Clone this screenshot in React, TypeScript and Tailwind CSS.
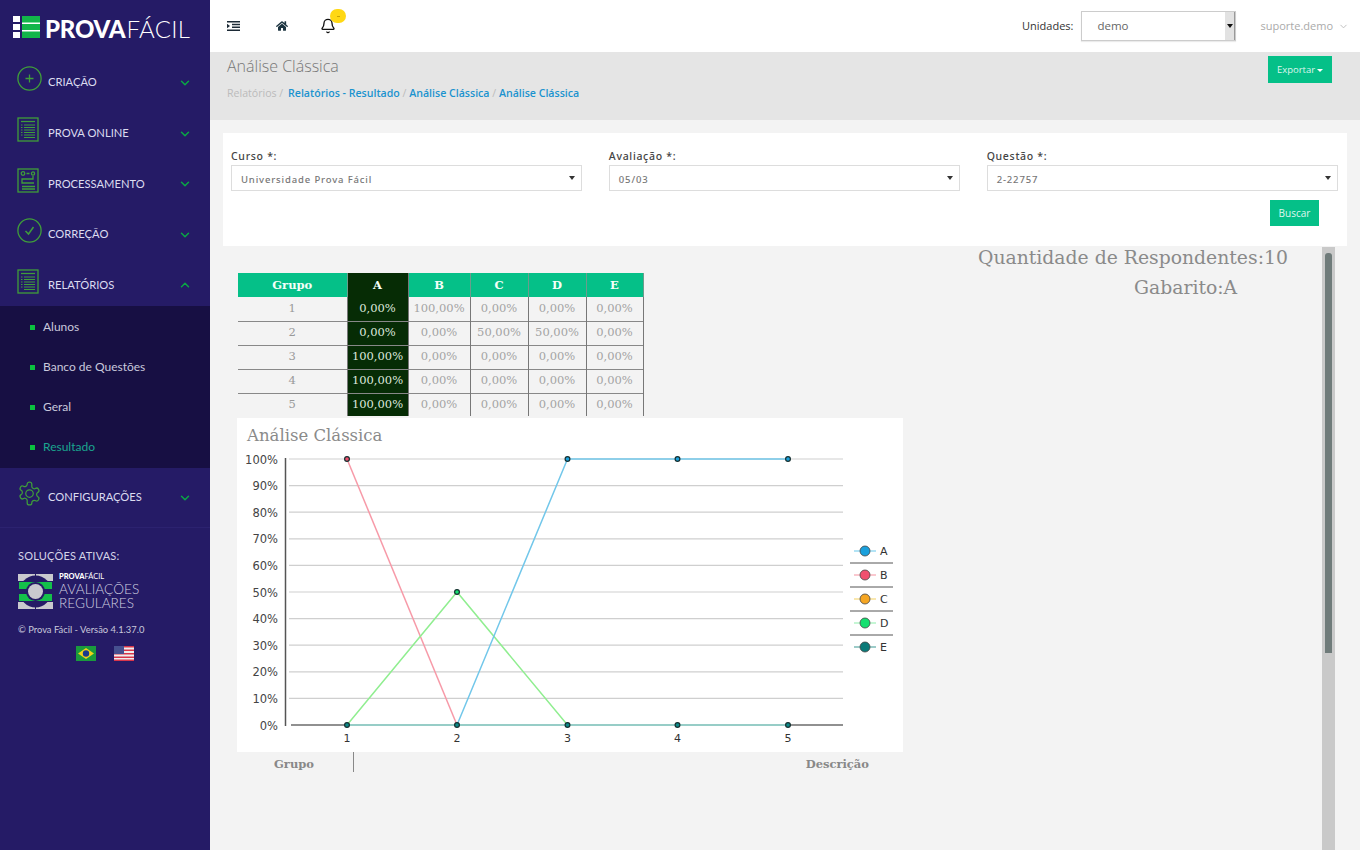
import React from "react";
import { FaHome } from "react-icons/fa";
import { ChevronDown, ChevronUp, Bell } from "lucide-react";

const G = "#3f9d3a";

function Plus() {
  return (
    <svg width="25" height="25" viewBox="0 0 25 25" fill="none" stroke={G} strokeWidth="1.3">
      <circle cx="12.5" cy="12.5" r="11.6" />
      <path d="M12.5 8.5v8M8.5 12.5h8" />
    </svg>
  );
}
function Doc() {
  return (
    <svg width="22" height="25" viewBox="0 0 22 25" fill="none" stroke={G} strokeWidth="1.3">
      <rect x="1" y="1" width="20" height="23" />
      <path d="M4 4.5h14" />
      <path d="M7 8h11M7 10.5h11M7 13h11M7 15.5h11M7 18h11M7 20.5h11" strokeWidth="1" />
      <path d="M4 8h1.5M4 10.5h1.5M4 13h1.5M4 15.5h1.5M4 18h1.5" strokeWidth="1" />
    </svg>
  );
}
function Proc() {
  return (
    <svg width="22" height="25" viewBox="0 0 22 25" fill="none" stroke={G} strokeWidth="1.3">
      <rect x="1" y="1" width="20" height="23" />
      <circle cx="6" cy="5.5" r="1.8" />
      <circle cx="16" cy="5.5" r="1.6" />
      <path d="M9.5 5.5h3M16 8v3H5v4h12M5 18.5h13M5 21h13" />
    </svg>
  );
}
function Check() {
  return (
    <svg width="25" height="25" viewBox="0 0 25 25" fill="none" stroke={G} strokeWidth="1.3">
      <circle cx="12.5" cy="12.5" r="11.6" />
      <path d="M8.5 13l3 3 5-7" strokeWidth="1.5" />
    </svg>
  );
}
function Gear() {
  return (
    <svg width="25" height="25" viewBox="0 0 24 24" fill="none" stroke={G} strokeWidth="1.2" strokeLinecap="round" strokeLinejoin="round">
      <path d="M12.22 1h-.44a2 2 0 0 0-2 2v.18a2 2 0 0 1-1 1.73l-.43.25a2 2 0 0 1-2 0l-.15-.08a2 2 0 0 0-2.73.73l-.22.38a2 2 0 0 0 .73 2.73l.15.1a2 2 0 0 1 1 1.72v.51a2 2 0 0 1-1 1.74l-.15.09a2 2 0 0 0-.73 2.73l.22.38a2 2 0 0 0 2.73.73l.15-.08a2 2 0 0 1 2 0l.43.25a2 2 0 0 1 1 1.73V21a2 2 0 0 0 2 2h.44a2 2 0 0 0 2-2v-.18a2 2 0 0 1 1-1.73l.43-.25a2 2 0 0 1 2 0l.15.08a2 2 0 0 0 2.73-.73l.22-.39a2 2 0 0 0-.73-2.73l-.15-.08a2 2 0 0 1-1-1.74v-.5a2 2 0 0 1 1-1.74l.15-.09a2 2 0 0 0 .73-2.73l-.22-.38a2 2 0 0 0-2.73-.73l-.15.08a2 2 0 0 1-2 0l-.43-.25a2 2 0 0 1-1-1.73V3a2 2 0 0 0-2-2z" />
      <circle cx="12" cy="12" r="3.6" />
    </svg>
  );
}

function NavItem({ icon, label, open, className }: { icon: React.ReactNode; label: string; open?: boolean; className: string }) {
  return (
    <div className={`flex items-center pr-[18px] ${className}`}>
      <div className="w-[48px] pl-[17px] shrink-0 -translate-y-1 flex">{icon}</div>
      <span className="flex-1 text-[11.2px] text-[#dcdcf0] font-['Lato',sans-serif]">{label}</span>
      {open ? <ChevronUp size={14} strokeWidth={2.5} color="#0aa845" /> : <ChevronDown size={14} strokeWidth={2.5} color="#0aa845" />}
    </div>
  );
}

function SubItem({ label, active }: { label: string; active?: boolean }) {
  return (
    <div className="h-[40px] flex items-center pl-[30px]">
      <span className="w-[5px] h-[5px] bg-[#0bc13f] mr-[8px]" />
      <span className={`text-[12px] font-['Lato',sans-serif] ${active ? "text-[#1aa58f]" : "text-[#c9c9dc]"}`}>{label}</span>
    </div>
  );
}

function Sidebar() {
  return (
    <aside className="w-[210px] shrink-0 bg-[#251b66] flex flex-col font-['Lato',sans-serif]">
      <div className="h-[57px] pl-[13px] pt-[16px] flex items-start">
        <svg width="27" height="22" viewBox="0 0 27 22" className="shrink-0">
          <path fill="#fff" d="M0 0h7v6H0zM0 8h7v6H0zM0 16h7v6H0z" />
          <path fill="#fff" d="M9 0h18v22H9z" />
          <path fill="#12b64a" d="M9 0h18v6.5H9zM9 8h18v6H9zM9 15.5h18V22H9z" />
        </svg>
        <span className="ml-[5px] mt-[1px] leading-[24px] text-white font-['Lato',sans-serif] whitespace-nowrap">
          <span className="font-black text-[24px] tracking-[-0.2px]">PROVA</span>
          <span className="font-light text-[24px] tracking-[0.3px] ml-[1px]">FÁCIL</span>
        </span>
      </div>
      <NavItem className="h-[51px]" icon={<Plus />} label="CRIAÇÃO" />
      <NavItem className="h-[51px]" icon={<Doc />} label="PROVA ONLINE" />
      <NavItem className="h-[50px]" icon={<Proc />} label="PROCESSAMENTO" />
      <NavItem className="h-[51px]" icon={<Check />} label="CORREÇÃO" />
      <NavItem className="h-[46px] pt-[4px]" icon={<Doc />} label="RELATÓRIOS" open />
      <div className="h-[162px] bg-[#170f43] pt-px">
        <SubItem label="Alunos" />
        <SubItem label="Banco de Questões" />
        <SubItem label="Geral" />
        <SubItem label="Resultado" active />
      </div>
      <NavItem className="h-[60px] border-b border-[#2c2270]" icon={<Gear />} label="CONFIGURAÇÕES" />
      <div className="pl-[18px] pt-[20px]">
        <div className="text-[11px] leading-[16px] text-[#d5d5e8] tracking-[0.2px]">SOLUÇÕES ATIVAS:</div>
        <div className="flex mt-[9px] items-center">
          <svg width="35" height="35" viewBox="0 0 35 35" className="shrink-0">
            <path fill="#c9c9ce" d="M0 0h17v7H0zM18 0h17v7H18zM0 28h17v7H0zM18 28h17v7H18z" />
            <circle cx="17.5" cy="17.5" r="16" fill="#251b66" />
            <rect x="1" y="8" width="33" height="7" fill="#14c04a" />
            <rect x="1" y="20" width="33" height="7" fill="#14c04a" />
            <circle cx="17.5" cy="17.5" r="9.5" fill="#251b66" />
            <circle cx="17.5" cy="17.5" r="7.5" fill="#c9c9cf" />
          </svg>
          <div className="ml-[6px] text-[#d0d0e0] font-['Lato',sans-serif]">
            <div className="text-[7.5px] leading-[8px] text-white"><b className="font-black">PROVA</b>FÁCIL</div>
            <div className="text-[13.6px] leading-[14px] font-light tracking-[0.1px] mt-[1px]">AVALIAÇÕES</div>
            <div className="text-[13.6px] leading-[14px] font-light">REGULARES</div>
          </div>
        </div>
        <div className="text-[9.4px] leading-[14px] text-[#c9c9dc] mt-[13px]">© Prova Fácil - Versão 4.1.37.0</div>
        <div className="flex mt-[9px] ml-[58px] gap-[18px]">
          <svg width="20" height="15" viewBox="0 0 20 15">
            <rect width="20" height="15" fill="#1a9a3d" />
            <path d="M10 2l8 5.5-8 5.5-8-5.5z" fill="#f2d21a" />
            <circle cx="10" cy="7.5" r="3.2" fill="#1c3a8c" />
          </svg>
          <svg width="20" height="15" viewBox="0 0 20 15">
            <rect width="20" height="15" fill="#eee" />
            <path d="M0 0h20v1.5H0zM0 3.5h20V5H0zM0 7h20v1.5H0zM0 10.5h20V12H0zM0 13.5h20V15H0z" fill="#d8354a" />
            <rect width="10" height="8" fill="#46508f" />
          </svg>
        </div>
      </div>
    </aside>
  );
}

function Topbar() {
  return (
    <header className="h-[52px] shrink-0 bg-white flex items-center font-['Open_Sans',sans-serif]">
      <svg width="13" height="10" viewBox="0 0 13 10" className="ml-[17px] fill-[#1c2a36]">
        <path d="M0 0h13v1.6H0zM5 2.8h8v1.4H5zM5 5.6h8V7H5zM0 8.4h13V10H0zM0 2.8l3 2.2-3 2.2z" />
      </svg>
      <FaHome size={12} color="#1c3440" className="ml-[36px]" />
      <div className="relative ml-[32px] flex">
        <Bell size={16} strokeWidth={2} color="#111" />
        <span className="absolute left-[10px] -top-[9px] w-[16px] h-[14px] rounded-full bg-[#ffd814] flex items-center justify-center">
          <span className="w-[3px] h-px bg-[#c9a400]" />
        </span>
      </div>
      <div className="ml-auto flex items-center">
        <span className="text-[11px] text-[#333]">Unidades:</span>
        <div className="ml-[8px] w-[155px] h-[30px] border border-[#ccc] flex items-center justify-between shadow-[0_1px_1px_rgba(0,0,0,0.08)]">
          <span className="pl-[15px] text-[11.5px] text-[#666]">demo</span>
          <span className="w-[10px] h-full bg-[#e2e2e2] border-r border-[#999] flex items-center justify-center">
            <span className="border-x-[3px] border-x-transparent border-t-[4px] border-t-[#111]" />
          </span>
        </div>
        <span className="ml-[24px] text-[11px] text-[#aaa]">suporte.demo</span>
        <ChevronDown size={11} color="#bbb" className="ml-[5px] mr-[11px]" />
      </div>
    </header>
  );
}

function Field({ label, value, className }: { label: string; value: string; className?: string }) {
  return (
    <div className={className}>
      <div className="text-[10.5px] leading-[14px] text-[#444] tracking-[0.7px] font-medium font-['Noto_Sans',sans-serif]">{label}</div>
      <div className="mt-[2px] h-[26px] border border-[#ddd] bg-white flex items-center justify-between pl-[9px] pr-[6px] font-['Noto_Sans',sans-serif]">
        <span className="text-[9.5px] text-[#777] tracking-[0.85px] font-medium pt-[5px]">{value}</span>
        <span className="border-x-[3px] border-x-transparent border-t-[4px] border-t-[#333]" />
      </div>
    </div>
  );
}

const ROWS = [
  ["1", "0,00%", "100,00%", "0,00%", "0,00%", "0,00%"],
  ["2", "0,00%", "0,00%", "50,00%", "50,00%", "0,00%"],
  ["3", "100,00%", "0,00%", "0,00%", "0,00%", "0,00%"],
  ["4", "100,00%", "0,00%", "0,00%", "0,00%", "0,00%"],
  ["5", "100,00%", "0,00%", "0,00%", "0,00%", "0,00%"],
];

function DataTable() {
  return (
    <table className="w-[405px] ml-px table-fixed border-collapse font-['DejaVu_Serif',serif] text-[11.5px]">
      <colgroup>
        <col className="w-[109px]" />
        <col className="w-[61px]" />
        <col className="w-[62px]" />
        <col className="w-[58px]" />
        <col className="w-[58px]" />
        <col className="w-[57px]" />
      </colgroup>
      <thead>
        <tr className="h-[24px]">
          {["Grupo", "A", "B", "C", "D", "E"].map((h, i) => (
            <th key={h} className={`font-bold text-[11.5px] text-[#f4fff8] p-0 pt-px ${i === 1 ? "bg-[#062c05] border-x border-[#777]" : "bg-[#05c088] border-r border-[#6c9c8c]"}`}>{h}</th>
          ))}
        </tr>
      </thead>
      <tbody>
        {ROWS.map((r, ri) => (
          <tr key={r[0]} className={ri === 4 ? "h-[23px]" : "h-[24px] border-b border-[#888]"}>
            {r.map((c, i) => (
              <td key={i} className={`p-0 text-center whitespace-nowrap ${i === 1 ? "bg-[#062c05] text-[#dfe8df] border-x border-[#777]" : i === 0 ? "text-[#999]" : "text-[#a3a3a3] border-r border-[#777]"}`}>{c}</td>
            ))}
          </tr>
        ))}
      </tbody>
    </table>
  );
}

function Chart() {
  const xs = [347, 457, 567.5, 677.5, 788];
  const y = (v: number) => 459 - 418 + ((100 - v) / 100) * 266;
  const line = (vals: number[]) => vals.map((v, i) => `${xs[i] - 237},${y(v)}`).join(" ");
  const pct = [100, 90, 80, 70, 60, 50, 40, 30, 20, 10, 0];
  const legend = [
    { n: "A", c: "#1aa0dc", l: "#7fd0ee" },
    { n: "B", c: "#f0506e", l: "#f7a3b0" },
    { n: "C", c: "#f5a623", l: "#f5d77a" },
    { n: "D", c: "#15e070", l: "#9ff0b8" },
    { n: "E", c: "#0b7a78", l: "#5aa8a4" },
  ];
  const Dot = ({ cx, cy, c }: { cx: number; cy: number; c: string }) => (
    <circle cx={cx - 237} cy={cy} r="2.4" fill={c} stroke="#163030" strokeWidth="1.2" />
  );
  return (
    <svg width="666" height="334" viewBox="0 0 666 334" className="bg-white block">
      <text x="10" y="23" fontFamily="'DejaVu Serif',serif" fontSize="16.5" fill="#8a8a8a">Análise Clássica</text>
      {pct.map((p) => (
        <g key={p}>
          {p > 0 && <line x1="52" x2="606" y1={y(p)} y2={y(p)} stroke="#cfcfcf" strokeWidth="1.2" />}
          <text x="41" y={y(p) + 4.5} textAnchor="end" fontFamily="'DejaVu Sans',sans-serif" fontSize="11.5" fill="#444">{p}%</text>
        </g>
      ))}
      <line x1="48.5" x2="48.5" y1={y(100) - 1} y2={y(0) + 1} stroke="#555" strokeWidth="1.5" />
      <line x1="54" x2="110" y1={y(0)} y2={y(0)} stroke="#6b6b6b" strokeWidth="1.6" />
      <line x1="110" x2="551" y1={y(0)} y2={y(0)} stroke="#74bdb5" strokeWidth="1.6" />
      <line x1="551" x2="606" y1={y(0)} y2={y(0)} stroke="#6b6b6b" strokeWidth="1.6" />
      <polyline points={line([100, 0, 0, 0, 0]).split(" ").slice(0, 2).join(" ")} fill="none" stroke="#f79aa8" strokeWidth="1.5" />
      <polyline points={line([0, 50, 0, 0, 0]).split(" ").slice(0, 3).join(" ")} fill="none" stroke="#90ee90" strokeWidth="1.5" />
      <polyline points={line([0, 0, 100, 100, 100]).split(" ").slice(1).join(" ")} fill="none" stroke="#72c7ea" strokeWidth="1.5" />
      {xs.map((x, i) => (
        <g key={x}>
          <Dot cx={x} cy={y(0)} c="#0b8a88" />
          <text x={x - 237} y={y(0) + 17} textAnchor="middle" fontFamily="'DejaVu Sans',sans-serif" fontSize="11" fill="#333">{i + 1}</text>
        </g>
      ))}
      <Dot cx={347} cy={y(100)} c="#f0506e" />
      <Dot cx={457} cy={y(50)} c="#15e070" />
      <Dot cx={567.5} cy={y(100)} c="#1aa0dc" />
      <Dot cx={677.5} cy={y(100)} c="#1aa0dc" />
      <Dot cx={788} cy={y(100)} c="#1aa0dc" />
      {legend.map((l, i) => {
        const cy = 133 + i * 24;
        return (
          <g key={l.n}>
            <line x1="617" x2="639" y1={cy} y2={cy} stroke={l.l} strokeWidth="1.2" />
            <circle cx="628" cy={cy} r="5" fill={l.c} stroke="#444" strokeWidth="0.8" />
            <text x="643" y={cy + 4} fontFamily="'DejaVu Sans',sans-serif" fontSize="11" fill="#333">{l.n}</text>
            {i < 4 && <line x1="613" x2="656" y1={cy + 12} y2={cy + 12} stroke="#555" strokeWidth="1" />}
          </g>
        );
      })}
    </svg>
  );
}

export default function App() {
  return (
    <div className="flex w-[1360px] h-[850px] overflow-hidden bg-[#f3f3f3]">
      <Sidebar />
      <main className="flex-1 min-w-0 flex flex-col">
        <Topbar />
        <div className="h-[68px] shrink-0 bg-[#e5e5e5] flex justify-between pl-[17px] pr-[28px] font-['Open_Sans',sans-serif]">
          <div>
            <div className="text-[16px] leading-[28px] text-[#777] font-light">Análise Clássica</div>
            <div className="text-[10.6px] leading-[16px] mt-[5px] font-semibold text-[#1b93cf]">
              <span className="text-[#bbb] font-normal mr-[2px]">Relatórios / </span>Relatórios - Resultado <span className="text-[#bbb] font-normal">/</span> Análise Clássica <span className="text-[#bbb] font-normal">/</span> Análise Clássica
            </div>
          </div>
          <button className="mt-[4px] pt-px w-[64px] h-[27px] bg-[#05c088] text-[#dff6ee] text-[9.5px] flex items-center justify-center gap-[2px]">
            Exportar<span className="border-x-[3px] border-x-transparent border-t-[3px] border-t-white" />
          </button>
        </div>
        <div className="mt-[13px] mx-[13px] h-[113px] shrink-0 bg-white pl-[8px] pr-[9px] pt-[16px]">
          <div className="grid grid-cols-3 gap-x-[26.5px]">
            <Field label="Curso *:" value="Universidade Prova Fácil" />
            <Field label="Avaliação *:" value="05/03" />
            <Field label="Questão *:" value="2-22757" />
          </div>
          <div className="flex justify-end mt-[9px] pr-[19px]">
            <button className="w-[49px] h-[26px] bg-[#05c088] text-[#dff6ee] text-[10px] font-['Open_Sans',sans-serif]">Buscar</button>
          </div>
        </div>
        <div className="flex-1 min-h-0 flex">
          <div className="flex-1 min-w-0 pl-[27px] pt-[27px] relative">
            <DataTable />
            <div className="absolute left-[768px] -top-[3px] font-['DejaVu_Serif',serif] text-[#8a8a8a] text-[18.8px] leading-[30px] whitespace-nowrap">
              <div>Quantidade de Respondentes:10</div>
              <div className="pl-[156px]">Gabarito:A</div>
            </div>
            <div className="mt-[2px] w-[666px]">
              <Chart />
            </div>
            <div className="w-[666px] h-[20px] flex items-center font-['DejaVu_Serif',serif] font-bold text-[11.5px] text-[#888]">
              <div className="w-[117px] h-full border-r border-[#888] flex items-center justify-center pr-[2px] pt-[5px]">Grupo</div>
              <div className="flex-1 text-right pr-[34px] pt-[5px]">Descrição</div>
            </div>
          </div>
          <div className="w-[13px] mr-[25px] mt-[1px] bg-[#c9c9c9] px-[3px] pt-[6px] shrink-0">
            <div className="h-[400px] bg-[#6f7b7a] rounded-t-[3px]" />
          </div>
        </div>
      </main>
    </div>
  );
}
